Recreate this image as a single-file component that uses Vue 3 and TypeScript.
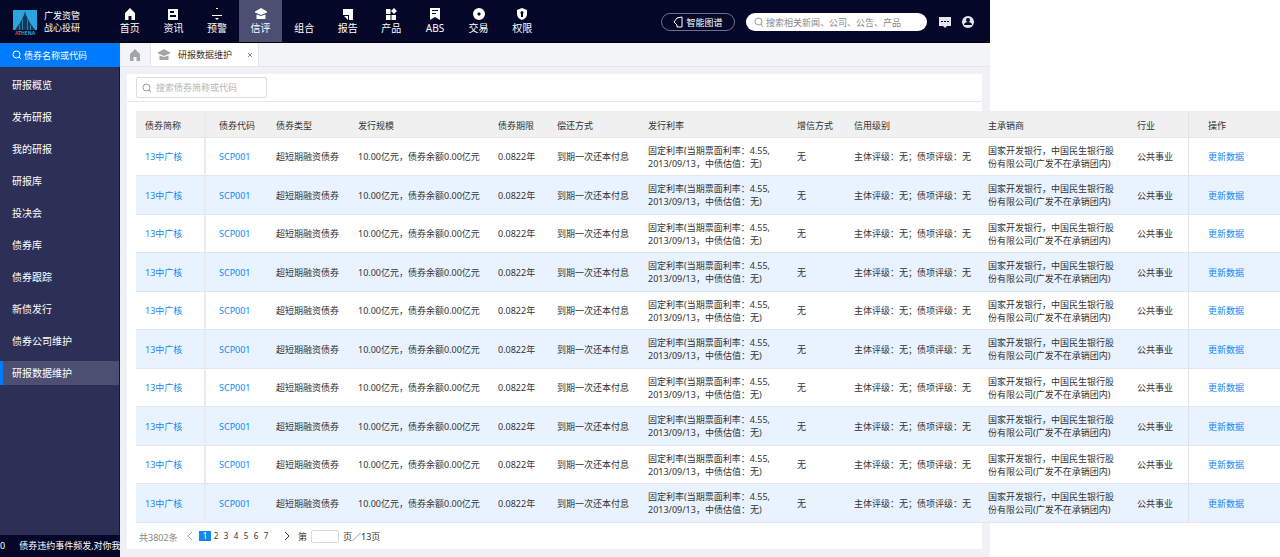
<script setup lang="ts">
import { ref } from 'vue'

interface NavItem { label: string; icon: string; active?: boolean }

const nav: NavItem[] = [
  { label: '首页', icon: 'M6 0L1 5v7h3.500V8h3v4H11V5z' },
  { label: '资讯', icon: 'M1 1h10v11H1zM3 3v2h4V3zM3 7v2h6V7z' },
  { label: '预警', icon: 'M5 0h2v1H5zM1 7h10v1H1zM4 10h4l-2 2z' },
  { label: '信评', icon: 'M6 0l6 3.500v1L6 7 0 4.500v-1zM1.500 6.500L6 8l4.500-1.500V11h-9z', active: true },
  { label: '组合', icon: '' },
  { label: '报告', icon: 'M1 1h10v11H7V7H1zM2 8h4v4z' },
  { label: '产品', icon: 'M1 1h4.500v5H1zM9 0l3 3-3 3-3-3zM1 7h4.500v5H1zM6.500 7H11v5H6.500z' },
  { label: 'ABS', icon: 'M1 0h10v12L6 9l-5 3zM3 2v1h6V2zM3 5v1h4V5z' },
  { label: '交易', icon: 'M6 0a6 6 0 1 0 0 12A6 6 0 0 0 6 0zM6 4l2 2-2 2-2-2z' },
  { label: '权限', icon: 'M6 0l5 2v4c0 3-2 5-5 6-3-1-5-3-5-6V2zM6 3a2 2 0 0 0-1 3v3h2V6a2 2 0 0 0-1-3z' },
]

const menu = ['研报概览', '发布研报', '我的研报', '研报库', '投决会', '债券库', '债券跟踪', '新债发行', '债券公司维护', '研报数据维护']
const current = ref('研报数据维护')
const columns = ['债券简称', '债券代码', '债券类型', '发行规模', '债券期限', '偿还方式', '发行利率', '增信方式', '信用级别', '主承销商', '行业', '操作']

const bonds = Array.from({ length: 10 }, (_, id) => ({
  id,
  name: '13中广核',
  code: 'SCP001',
  cells: [
    '超短期融资债券',
    '10.00亿元，债券余额0.00亿元',
    '0.0822年',
    '到期一次还本付息',
    '固定利率(当期票面利率：4.55,\n2013/09/13，中债估值：无)',
    '无',
    '主体评级：无；债项评级：无',
    '国家开发银行，中国民生银行股\n份有限公司(广发不在承销团内)',
    '公共事业',
  ],
}))
const pages = [1, 2, 3, 4, 5, 6, 7]
const page = ref(1)
</script>

<template>
  <div class="app">
    <header class="top">
      <div class="brand">
        <svg class="logo" viewBox="0 0 24 30" aria-hidden="true">
          <path fill="#2ba5df" d="M0 0h24v20H0z" />
          <path fill="#123a5c" d="M12 1l1 4 2 4 2 4 3 4 2 3H2l2-3 3-4 2-4 2-4z" />
          <path stroke="#2a7aa8" fill="none" d="M9.500 9v11M14.500 9v11M6.500 15v5M17.500 15v5" />
          <text x="2" y="25" font-size="5" font-weight="700" fill="#2ba5df"><tspan fill="#e2343c">A</tspan>THENA</text>
        </svg>
        <div class="brand-name"><span>广发资管</span><span>战心投研</span></div>
      </div>
      <nav class="nav">
        <a v-for="item in nav" :key="item.label" href="#" :class="{ active: item.active }">
          <svg viewBox="0 0 12 12" aria-hidden="true"><path :d="item.icon" fill="currentColor" fill-rule="evenodd" /></svg>
          <span>{{ item.label }}</span>
        </a>
      </nav>
      <div class="tools">
        <button class="graph" type="button">
          <svg viewBox="0 0 10 12" aria-hidden="true"><path d="M9 1v10H4V9L1 6l3-4 5-1" fill="none" stroke="#fff" /></svg>
          智能图谱
        </button>
        <label class="global-search">
          <svg viewBox="0 0 10 10" aria-hidden="true"><circle cx="4.500" cy="4.500" r="3.500" /><path d="M7 7l2 3" /></svg>
          <input type="search" aria-label="全局搜索" placeholder="搜索相关新闻、公司、公告、产品" />
        </label>
        <button class="icon-button" type="button" aria-label="消息">
          <svg viewBox="0 0 12 12"><path fill="#e4e5ec" fill-rule="evenodd" d="M0 1h12v9H8l-2 2-2-2H0zM2 5v1h2V5zM5 5v1h2V5zM8 5v1h2V5z" /></svg>
        </button>
        <button class="icon-button" type="button" aria-label="用户">
          <svg viewBox="0 0 12 12"><circle cx="6" cy="6" r="6" fill="#e4e5ec" /><circle cx="6" cy="4" r="2" fill="#050728" /><path d="M2 9c0-4 8-4 8 0z" fill="#050728" /></svg>
        </button>
      </div>
    </header>

    <div class="body">
      <aside class="side">
        <label class="side-search">
          <svg viewBox="0 0 10 10" aria-hidden="true"><circle cx="4.500" cy="4.500" r="3.500" /><path d="M7 7l2 2" /></svg>
          <input type="search" aria-label="债券搜索" placeholder="债券名称或代码" />
        </label>
        <nav class="menu">
          <a v-for="m in menu" :key="m" href="#" :class="{ active: m === current }" @click.prevent="current = m">{{ m }}</a>
        </nav>
        <div class="ticker"><span>0</span><span>债券违约事件频发,对你我们</span></div>
      </aside>

      <main class="main">
        <div class="tabs">
          <a class="home" href="#" aria-label="首页"><svg viewBox="0 0 12 12"><path :d="nav[0].icon" fill="#a3a5aa" /></svg></a>
          <div class="tab">
            <svg viewBox="0 0 12 12" aria-hidden="true"><path :d="nav[3].icon" fill="#a3a5aa" /></svg>
            <span>研报数据维护</span>
            <button type="button" aria-label="关闭"><svg viewBox="0 0 6 6"><path d="M1 1l4 4M5 1L1 5" stroke="#888" fill="none" /></svg></button>
          </div>
        </div>

        <section class="panel">
          <div class="filter">
            <label>
              <svg viewBox="0 0 10 10" aria-hidden="true"><circle cx="4.500" cy="4.500" r="3.500" /><path d="M7 7l2 2" /></svg>
              <input type="search" aria-label="搜索债券" placeholder="搜索债券简称或代码" />
            </label>
          </div>
          <table>
            <colgroup><col v-for="(c, i) in columns" :key="c" :class="'c' + (i + 1)" /></colgroup>
            <thead><tr><th v-for="c in columns" :key="c" scope="col">{{ c }}</th></tr></thead>
            <tbody>
              <tr v-for="b in bonds" :key="b.id">
                <td><a href="#">{{ b.name }}</a></td>
                <td><a href="#">{{ b.code }}</a></td>
                <td v-for="(cell, i) in b.cells" :key="i">{{ cell }}</td>
                <td><a href="#">更新数据</a></td>
              </tr>
            </tbody>
          </table>
          <div class="pager">
            <span class="total">共3802条</span>
            <button class="arrow prev" type="button" aria-label="上一页"><svg viewBox="0 0 6 10"><path d="M5 1L1 5l4 4" /></svg></button>
            <button v-for="p in pages" :key="p" type="button" class="num" :class="{ on: p === page }" @click="page = p">{{ p }}</button>
            <button class="arrow next" type="button" aria-label="下一页"><svg viewBox="0 0 6 10"><path d="M1 1l4 4-4 4" /></svg></button>
            <label class="jump">第<input type="text" aria-label="页码" />页／13页</label>
          </div>
        </section>
      </main>
    </div>
  </div>
</template>

<style>
body { background: #fff; overflow-x: hidden; }
</style>

<style scoped>
* { box-sizing: border-box; }
.app {
  display: flex;
  flex-direction: column;
  width: calc(100% - 290px);
  min-height: 100vh;
  font-family: "Noto Sans", "Noto Sans CJK SC", sans-serif;
  font-size: 9px;
  line-height: 13px;
  color: #333;
}
a { color: inherit; text-decoration: none; }
svg { display: block; flex: none; }
button, input { font: inherit; color: inherit; border: 0; padding: 0; margin: 0; background: none; outline: 0; min-width: 0; }
button { cursor: pointer; }
label svg { width: 10px; height: 10px; fill: none; stroke: #999; }
input[type="search"] { appearance: none; flex: 1; }

.top { display: flex; height: 43px; background: #050728; color: #fff; border-bottom: 1px solid #000; }
.brand { display: flex; gap: 7px; width: 108px; padding: 10px 0 0 13px; }
.logo { width: 24px; height: 30px; }
.brand-name { display: flex; flex-direction: column; line-height: 12px; }
.nav { display: flex; width: 436px; font-size: 10px; }
.nav a { flex: 1; display: flex; flex-direction: column; align-items: center; gap: 1px; padding-top: 8px; }
.nav a.active { background: #4d4f72; }
.nav svg { width: 12px; height: 12px; }
.nav span { line-height: 15px; }
.tools { display: flex; align-items: flex-start; margin-left: auto; padding: 13px 16px 0 0; }
.graph { display: flex; align-items: center; justify-content: center; gap: 3px; width: 74px; height: 18px; border: 1px solid #6d6f8b; border-radius: 9px; }
.graph svg { width: 10px; height: 12px; }
.global-search { display: flex; align-items: center; gap: 2px; width: 181px; height: 18px; margin: 0 12px 0 11px; padding: 0 8px; border-radius: 9px; background: #fff; }
.global-search input::placeholder { color: #888; opacity: 1; }
.icon-button { width: 12px; height: 18px; margin-right: 11px; }
.icon-button:last-child { margin-right: 0; }
.icon-button svg { width: 12px; height: 12px; }

.body { display: flex; flex: 1; }
.side { display: flex; flex-direction: column; flex: none; width: 120px; background: #2d3056; color: #fff; }
.side-search { display: flex; align-items: center; gap: 2px; height: 24px; padding-left: 12px; background: #007aff; }
.side-search svg { stroke: #fff; }
.side-search input::placeholder { color: #fff; opacity: 1; }
.menu { display: flex; flex-direction: column; gap: 8px; padding-top: 6px; font-size: 10px; border-right: 1px solid #15173a; flex: 1; }
.menu a { height: 24px; line-height: 24px; padding-left: 12px; }
.menu a.active { background: #4d4f72; border-left: 3px solid #007aff; padding-left: 9px; }
.ticker { display: flex; gap: 14px; height: 22px; overflow: hidden; white-space: nowrap; line-height: 21px; background: #050728; }

.main { flex: 1; min-width: 0; background: #f0f1f6; }
.tabs { display: flex; height: 24px; border-bottom: 1px solid #e4e6ea; background: #f3f4f8; }
.home { display: flex; align-items: center; justify-content: center; width: 31px; border-right: 1px solid #e4e6ea; }
.home svg, .tab > svg { width: 12px; height: 12px; }
.tab { display: flex; align-items: center; gap: 8px; width: 108px; padding: 0 5px 0 7px; background: #fff; border-right: 1px solid #e4e6ea; }
.tab button { margin-left: auto; }
.tab button svg { width: 6px; height: 6px; }

.panel { margin: 7px 8px 7px 7px; background: #fff; }
.filter { padding: 3px 9px; height: 28px; border-bottom: 1px solid #e6e7ea; }
.filter label { display: flex; align-items: center; gap: 4px; width: 131px; height: 21px; padding: 0 5px; border: 1px solid #dcdde0; border-radius: 2px; }
.filter input::placeholder { color: #b5b5b5; opacity: 1; }

table { width: calc(100vw - 136px); margin: 9px 0 0 9px; table-layout: fixed; border-collapse: separate; border-spacing: 0; }
.c1 { width: 70px; } .c2 { width: 61px; } .c3 { width: 82px; } .c4 { width: 140px; }
.c5 { width: 59px; } .c6 { width: 91px; } .c7 { width: 149px; } .c8 { width: 57px; }
.c9 { width: 134px; } .c10 { width: 149px; } .c11 { width: 60px; }
th, td { padding: 0 0 0 9px; text-align: left; font-weight: 400; white-space: pre; border-bottom: 1px solid #e3e6ea; }
th { height: 27px; padding-top: 2px; background: #f0f0f0; }
td { height: 38px; background: #fff; }
tr:nth-child(even) td { height: 39px; background: #e8f3ff; }
th:nth-child(2), td:nth-child(2) { padding-left: 13px; }
th:first-child, td:first-child { border-right: 2px solid #e9ebef; }
th:last-child, td:last-child { padding-left: 19px; border-left: 1px solid #e0e3e8; }
td a { color: #1288f5; }

.pager { display: flex; align-items: center; height: 26px; padding-left: 12px; }
.total { width: 48px; color: #888; padding-top: 2px; }
.arrow svg { width: 6px; height: 10px; fill: none; stroke: #333; }
.prev { margin-right: 6px; }
.prev svg { stroke: #aaa; }
.num { width: 10px; height: 10px; line-height: 10px; font-size: 8px; }
.num.on { width: 12px; background: #1288f5; color: #fff; }
.next { margin: 0 8px 0 13px; }
.jump { display: flex; align-items: center; gap: 4px; }
.jump input { width: 28px; height: 13px; border: 1px solid #d9d9d9; border-radius: 2px; }
</style>
